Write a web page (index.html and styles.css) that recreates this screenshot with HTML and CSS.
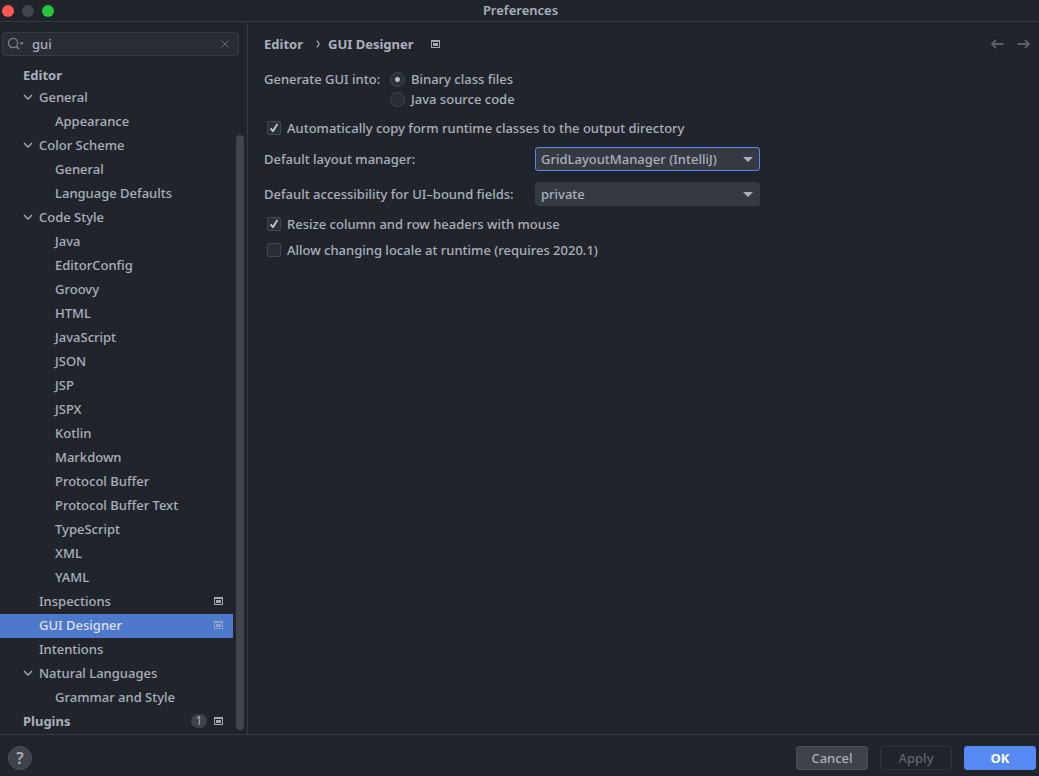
FILE: index.html
```html
<!DOCTYPE html>
<html lang="en">
<head>
<meta charset="utf-8">
<title>Preferences</title>
<link rel="stylesheet" href="styles.css">
</head>
<body>
<svg class="defs" aria-hidden="true">
  <symbol id="chevron" viewBox="0 0 10 10"><path d="M1 3l4 4 4-4" fill="none" stroke="currentColor" stroke-width="1.3"/></symbol>
  <symbol id="project" viewBox="0 0 9 8"><path d="M0 0h9v8H0zM1 2v5h7V2zM2 3h5v3H2z" fill="currentColor" fill-rule="evenodd"/></symbol>
  <symbol id="arrow" viewBox="0 0 14 12"><path d="M13.500 6H2M6 2L2 6l4 4" fill="none" stroke="currentColor" stroke-width="1.800"/></symbol>
</svg>
<div class="window">
  <header class="titlebar">
    <div class="lights">
      <button class="light red" aria-label="Close"></button>
      <button class="light gray" aria-label="Minimize"></button>
      <button class="light green" aria-label="Zoom"></button>
    </div>
    <h1 class="title">Preferences</h1>
  </header>
  <div class="body">
    <aside class="sidebar">
      <div class="search">
        <svg class="search-icon" viewBox="0 0 18 14" aria-hidden="true"><circle cx="6" cy="6" r="4.600" fill="none" stroke="currentColor" stroke-width="1.200"/><path d="M9.300 9.300l2.700 2.700" stroke="currentColor" stroke-width="1.500"/><path d="M12 5.500h5L14.500 8z" fill="currentColor"/></svg>
        <input class="search-input" type="text" value="gui" aria-label="Search settings">
        <button class="clear" aria-label="Clear"><svg viewBox="0 0 8 8"><path d="M.5.5l7 7M7.500.5l-7 7" stroke="currentColor" stroke-width="1"/></svg></button>
      </div>
      <div class="tree-area">
        <ul class="tree">
          <li class="row top first">Editor</li>
          <li class="row group"><svg class="chev"><use href="#chevron"/></svg>General</li>
          <li class="row leaf">Appearance</li>
          <li class="row group"><svg class="chev"><use href="#chevron"/></svg>Color Scheme</li>
          <li class="row leaf">General</li>
          <li class="row leaf">Language Defaults</li>
          <li class="row group"><svg class="chev"><use href="#chevron"/></svg>Code Style</li>
          <li class="row leaf">Java</li>
          <li class="row leaf">EditorConfig</li>
          <li class="row leaf">Groovy</li>
          <li class="row leaf">HTML</li>
          <li class="row leaf">JavaScript</li>
          <li class="row leaf">JSON</li>
          <li class="row leaf">JSP</li>
          <li class="row leaf">JSPX</li>
          <li class="row leaf">Kotlin</li>
          <li class="row leaf">Markdown</li>
          <li class="row leaf">Protocol Buffer</li>
          <li class="row leaf">Protocol Buffer Text</li>
          <li class="row leaf">TypeScript</li>
          <li class="row leaf">XML</li>
          <li class="row leaf">YAML</li>
          <li class="row item">Inspections<svg class="proj end"><use href="#project"/></svg></li>
          <li class="row item selected">GUI Designer<svg class="proj end"><use href="#project"/></svg></li>
          <li class="row item">Intentions</li>
          <li class="row group"><svg class="chev"><use href="#chevron"/></svg>Natural Languages</li>
          <li class="row leaf">Grammar and Style</li>
          <li class="row top">Plugins<span class="count end">1</span><svg class="proj"><use href="#project"/></svg></li>
        </ul>
        <div class="scrollbar"><div class="thumb"></div></div>
      </div>
    </aside>
    <main class="content">
      <div class="heading">
        <nav class="crumbs" aria-label="Breadcrumb">
          <span>Editor</span>
          <svg class="sep" viewBox="0 0 4 8"><path d="M.7.7Q3.200 3 3.200 4T.7 7.300" fill="none" stroke="currentColor" stroke-width="1.200"/></svg>
          <span>GUI Designer</span>
          <svg class="proj crumb-proj"><use href="#project"/></svg>
        </nav>
        <div class="history">
          <button class="nav" aria-label="Back"><svg><use href="#arrow"/></svg></button>
          <button class="nav forward" aria-label="Forward"><svg><use href="#arrow"/></svg></button>
        </div>
      </div>
      <form class="form">
        <div class="generate" role="radiogroup" aria-labelledby="gen">
          <span class="gen-label" id="gen">Generate GUI into:</span>
          <div>
            <label class="option"><input class="radio" type="radio" name="target" checked>Binary class files</label>
            <label class="option"><input class="radio" type="radio" name="target">Java source code</label>
          </div>
        </div>
        <label class="check copy"><input class="box" type="checkbox" checked>Automatically copy form runtime classes to the output directory</label>
        <div class="fields">
          <label for="layout">Default layout manager:</label>
          <div class="combo"><select class="select focused" id="layout"><option>GridLayoutManager (IntelliJ)</option></select></div>
          <label for="access">Default accessibility for UI–bound fields:</label>
          <div class="combo"><select class="select" id="access"><option>private</option></select></div>
        </div>
        <label class="check"><input class="box" type="checkbox" checked>Resize column and row headers with mouse</label>
        <label class="check"><input class="box" type="checkbox">Allow changing locale at runtime (requires 2020.1)</label>
      </form>
    </main>
  </div>
  <footer class="footer">
    <button class="help" aria-label="Help">?</button>
    <div class="actions">
      <button class="btn cancel">Cancel</button>
      <button class="btn apply" disabled>Apply</button>
      <button class="btn ok">OK</button>
    </div>
  </footer>
</div>
</body>
</html>
```
FILE: styles.css
```css
* { box-sizing: border-box; }
body {
  margin: 0;
  background: #21252b;
  color: #a9b0bd;
  font: 500 13px/20px "Noto Sans", "Open Sans", sans-serif;
}
button, input, select { font: inherit; color: inherit; margin: 0; }
button { padding: 0; border: 0; background: none; }
.defs { display: none; }
.window { min-height: 100vh; display: flex; flex-direction: column; }

.titlebar {
  display: grid;
  grid-template-columns: 1fr auto 1fr;
  align-items: center;
  height: 22px;
  padding-left: 2px;
  border-bottom: 1px solid #343941;
}
.lights { display: flex; gap: 8px; }
.light { width: 12px; height: 12px; border-radius: 50%; }
.red { background: #ff5650; }
.gray { background: #42454a; }
.green { background: #27c53b; }
.title { margin: 0; font-size: 13px; font-weight: 600; line-height: 18px; padding-bottom: 2px; }

.body { flex: 1; display: flex; }
.sidebar {
  width: 248px;
  flex: none;
  display: flex;
  flex-direction: column;
  border-right: 1px solid #343941;
}
.search {
  display: flex;
  align-items: center;
  height: 24px;
  margin: 10px 8px 8px 2px;
  padding: 0 9px 0 4px;
  border: 1px solid #363c47;
  border-radius: 3px;
  background: #282c34;
}
.search-icon { width: 18px; height: 14px; color: #7e8590; }
.search-input { flex: 1; min-width: 0; padding: 0 7px; border: 0; outline: 0; background: none; }
.clear { display: flex; color: #666c77; }
.clear svg { width: 8px; height: 8px; }
.tree-area { flex: 1; display: flex; }
.tree { flex: 1; margin: 0; padding: 0; list-style: none; }
.row {
  display: flex;
  align-items: center;
  height: 24px;
  padding-right: 10px;
  padding-bottom: 2px;
}
.row.first { height: 22px; padding-bottom: 0; }
.top { padding-left: 23px; font-weight: 700; }
.group { padding-left: 23px; }
.item { padding-left: 39px; }
.leaf { padding-left: 55px; }
.selected { background: #4d78cc; color: #dce2ec; }
.chev { width: 10px; height: 10px; margin-right: 6px; }
.proj { width: 9px; height: 8px; color: #a0a7b2; }
.selected .proj { color: #91a1bf; }
.end { margin-left: auto; }
.count {
  width: 16px;
  height: 14px;
  margin-right: 7px;
  border-radius: 7px;
  background: #3d424b;
  font-size: 12px;
  font-weight: 400;
  line-height: 14px;
  text-align: center;
}
.scrollbar { width: 14px; display: flex; padding: 71px 3px 4px; }
.thumb { flex: 1; border-radius: 4px; background: #424549; }

.content { flex: 1; min-width: 0; padding: 12px 8px 12px 16px; }
.heading { display: flex; justify-content: space-between; align-items: center; height: 20px; }
.crumbs { display: flex; align-items: center; font-weight: 700; }
.sep { width: 4px; height: 8px; margin: 0 8px 0 13px; }
.crumb-proj { margin-left: 17px; }
.history { display: flex; gap: 13px; }
.nav { display: flex; color: #5d6066; }
.nav svg { width: 14px; height: 12px; }
.forward { transform: scaleX(-1); }

.form { padding-top: 15px; }
.generate { display: grid; grid-template-columns: 126px auto; white-space: nowrap; }
.option, .check { display: flex; align-items: center; width: fit-content; }
.radio {
  appearance: none;
  width: 15px;
  height: 15px;
  margin-right: 6px;
  border: 1px solid #414855;
  border-radius: 50%;
  background: #282c34;
}
.radio:checked { background: radial-gradient(circle, #b4bac6 2px, #2b3039 3px); }
.check { margin: 6px 0 0 3px; }
.check.copy { margin-top: 9px; }
.box {
  appearance: none;
  width: 14px;
  height: 14px;
  margin-right: 6px;
  border: 1px solid #414855;
  border-radius: 2px;
  background: #282c34;
}
.box:checked {
  background: #2b3039 url("data:image/svg+xml,%3Csvg xmlns='http://www.w3.org/2000/svg' viewBox='0 0 12 12'%3E%3Cpath d='M2.500 6.300L5 9l4.500-7' fill='none' stroke='%23c3c8d2' stroke-width='1.800'/%3E%3C/svg%3E") center / 12px no-repeat;
}
.fields {
  display: grid;
  grid-template-columns: 258px minmax(0, 225px);
  gap: 11px 13px;
  align-items: center;
  margin: 9px 0 8px;
  white-space: nowrap;
}
.combo { position: relative; display: flex; }
.combo::after {
  content: "";
  position: absolute;
  right: 7px;
  top: 10px;
  border: 5px solid transparent;
  border-top-color: #a9b0bd;
  border-bottom: 0;
  pointer-events: none;
}
.select {
  appearance: none;
  width: 100%;
  height: 24px;
  padding: 0 20px 0 5px;
  border: 1px solid #353942;
  border-radius: 3px;
  outline: 0;
  background: #353942;
}
.focused { border-color: #568af2; }

.footer {
  display: flex;
  align-items: center;
  justify-content: space-between;
  height: 42px;
  padding: 5px 3px 0 8px;
  border-top: 1px solid #343941;
}
.help {
  width: 24px;
  height: 24px;
  border: 1px solid #4a4f58;
  border-radius: 50%;
  background: #3d424b;
  font-size: 16px;
  font-weight: 600;
}
.actions { display: flex; gap: 12px; }
.btn { width: 72px; height: 24px; border: 1px solid #4b505b; border-radius: 3px; }
.cancel { background: #3d424b; }
.apply { border-color: #2f333b; color: #5f646d; }
.ok { border-color: #568af2; background: #568af2; color: #fff; font-weight: 700; }
```
